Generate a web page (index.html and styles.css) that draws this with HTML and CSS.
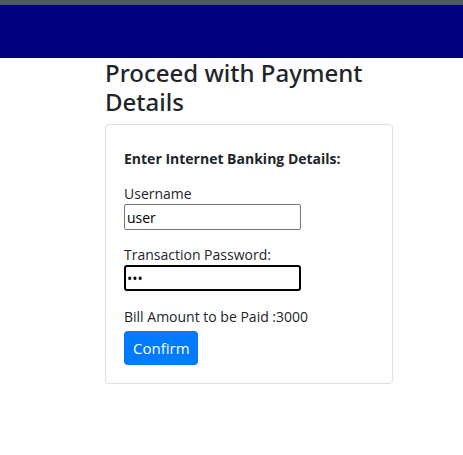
FILE: index.html
```html
<!DOCTYPE html>
<html>
<head>
<meta charset="utf-8">
<link rel="stylesheet" href="styles.css">
</head>
<body>
<div class="topbar"></div>
<header class="navbar"></header>
<main class="content">
  <h1 class="title">Proceed with Payment Details</h1>
  <section class="card">
    <form class="form">
      <p class="intro">Enter Internet Banking Details:</p>
      <div class="field">
        <label class="label" for="u">Username</label>
        <input class="input" id="u" type="text" value="user">
      </div>
      <div class="field">
        <label class="label" for="p">Transaction Password:</label>
        <input class="input focused" id="p" type="password" value="abc">
      </div>
      <p class="amount">Bill Amount to be Paid :3000</p>
      <button type="button" class="btn">Confirm</button>
    </form>
  </section>
</main>
</body>
</html>
```
FILE: styles.css
```css
* { box-sizing: border-box; }
html, body { margin: 0; padding: 0; background: #fff; }
body {
  font-family: "Open Sans", "Noto Sans", sans-serif;
  color: #212529;
  font-size: 16px;
}
.topbar { height: 5px; background: #4a5a63; }
.navbar { height: 53px; background: #000080; }
.content {
  width: 288px;
  margin-left: 105px;
}
.title {
  margin: 0 0 8px;
  font-family: "Noto Sans", "Open Sans", sans-serif;
  font-size: 24px;
  font-weight: 500;
  line-height: 29px;
  color: #212529;
}
.card {
  border: 1px solid #dfdfdf;
  border-radius: 4px;
  padding: 18px 18px 18px;
}
.form { display: flex; flex-direction: column; align-items: flex-start; }
.intro {
  margin: 6px 0 0;
  font-weight: 700;
  font-size: 14px;
  line-height: 20px;
}
.field { display: flex; flex-direction: column; align-items: flex-start; margin-top: 15px; }
.label { font-size: 14px; line-height: 20px; }
.input {
  width: 177px;
  height: 26px;
  border: 1px solid #767676;
  border-radius: 2px;
  padding: 0 2px;
  font-family: inherit;
  font-size: 14px;
  color: #000;
}
.input.focused { border: 2px solid #000; border-radius: 3px; padding: 0 1px; }
.amount { margin: 16px 0 0; font-size: 14px; line-height: 20px; }
.btn {
  margin-top: 4px;
  height: 34px;
  padding: 0 8px 0 9px;
  border: 0;
  border-radius: 4px;
  background: #007bff;
  color: #fff;
  font-family: inherit;
  font-size: 15px;
}
```
